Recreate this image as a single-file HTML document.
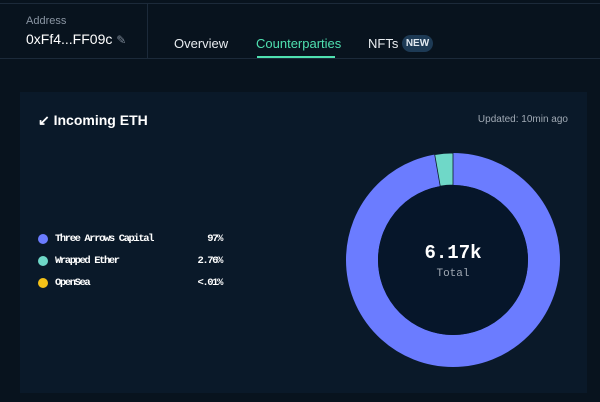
<!DOCTYPE html>
<html><head><meta charset="utf-8"><style>
body{margin:0;width:600px;height:402px;background:#08131e;font-family:"Liberation Sans",sans-serif;overflow:hidden;position:relative;color:#fff}
.topline{position:absolute;left:0;right:0;top:3px;height:1px;background:#1c2a3a}
.hline{position:absolute;left:0;right:0;top:58px;height:1px;background:#1c2a3a}
.vline{position:absolute;left:147px;top:3px;height:55px;width:1px;background:#1c2a3a}
.card{position:absolute;left:20px;top:92px;width:567px;height:301px;background:#0a1929}
.mono{font-family:"Liberation Mono",monospace;font-weight:bold}
</style></head><body>
<div class="topline"></div><div class="hline"></div><div class="vline"></div>
<div style="position:absolute;left:26px;top:15px;font-size:11px;color:#8a95a3">Address</div>
<div style="position:absolute;left:26px;top:31px;font-size:14px;color:#fff">0xFf4...FF09c <span style="color:#7a8593;font-size:12px">✎</span></div>
<div style="position:absolute;left:174px;top:36px;font-size:13px;color:#e8ecf0">Overview</div>
<div style="position:absolute;left:256px;top:36px;font-size:13px;color:#4fe0b0">Counterparties</div>
<div style="position:absolute;left:257px;top:56px;width:78px;height:2px;background:#4fe0b0"></div>
<div style="position:absolute;left:368px;top:36px;font-size:13px;color:#e8ecf0">NFTs</div>
<div style="position:absolute;left:402px;top:35px;width:31px;height:17px;border-radius:9px;background:#1d3a55;font-size:10px;font-weight:bold;line-height:17px;text-align:center;color:#e0e8f0">NEW</div>
<div class="card"></div>
<div style="position:absolute;left:38px;top:112px;font-size:14px;font-weight:bold">↙ Incoming ETH</div>
<div style="position:absolute;right:32px;top:114px;font-size:10px;color:#a0a9b4">Updated: 10min ago</div>
<div class="mono" style="position:absolute;left:38px;top:228px;font-size:10.5px;letter-spacing:-1.4px;line-height:22px;width:184px">
<div style="display:flex;align-items:center"><span style="width:10px;height:10px;border-radius:50%;background:#6b7cff;margin-right:7px"></span>Three Arrows Capital<span style="margin-left:auto">97%</span></div>
<div style="display:flex;align-items:center"><span style="width:10px;height:10px;border-radius:50%;background:#6fd8c8;margin-right:7px"></span>Wrapped Ether<span style="margin-left:auto">2.76%</span></div>
<div style="display:flex;align-items:center"><span style="width:10px;height:10px;border-radius:50%;background:#f5c218;margin-right:7px"></span>OpenSea<span style="margin-left:auto">&lt;.01%</span></div>
</div>
<svg style="position:absolute;left:346px;top:153px" width="214" height="214" viewBox="-107 -107 214 214">
<circle r="91" fill="none" stroke="#6b7cff" stroke-width="32"/>
<path d="M0,-107 L0,-75 A75,75 0 0 0 -12.8,-73.9 L-18.3,-105.4 A107,107 0 0 1 0,-107Z" fill="#6fd8c8" stroke="#0b1a2a" stroke-width="0.8"/>
<circle r="75" fill="#06162a"/>
</svg>
<div class="mono" style="position:absolute;left:403px;top:242px;width:100px;text-align:center;font-size:19px">6.17k</div>
<div style="position:absolute;left:403px;top:268px;width:100px;text-align:center;font-size:11px;font-family:'Liberation Mono',monospace;color:#a0a9b4">Total</div>
</body></html>
